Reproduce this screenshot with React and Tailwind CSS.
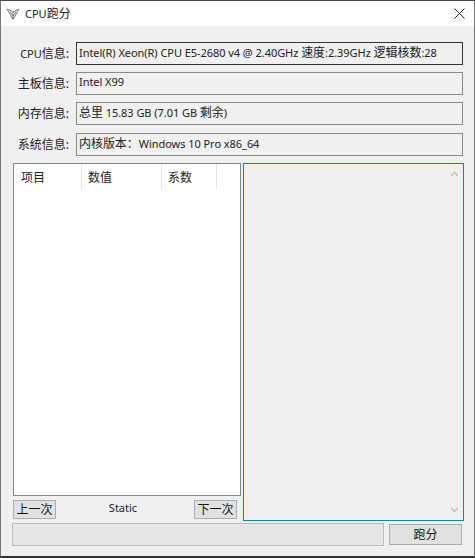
const font = { fontFamily: '"Noto Sans","Noto Sans CJK SC",sans-serif' };

function C({ children }) {
  return <span className="text-[12px]">{children}</span>;
}

function Row({ label, children, dark, className }) {
  return (
    <div className={`flex items-center ${className}`}>
      <div className="w-[70px] pr-[2px] text-right text-[11px] text-[#222] leading-none whitespace-nowrap">
        {label}
      </div>
      <div
        className={`ml-[5px] w-[387px] h-full border flex items-center pl-[2px] pb-[2px] text-[11px] tracking-[-0.05px] text-[#222] whitespace-pre overflow-hidden ${
          dark ? 'border-[#333]' : 'border-[#8a8a8a]'
        }`}
      >
        <span>{children}</span>
      </div>
    </div>
  );
}

function SmallBtn({ children }) {
  return (
    <button className="w-[43px] h-[19px] bg-[#e1e1e1] border border-[#adadad] text-[12px] leading-none text-[#111] flex items-center justify-center">
      {children}
    </button>
  );
}

export default function App() {
  return (
    <div
      className="w-[475px] h-[558px] bg-[#f0f0f0] flex flex-col border-t border-t-[#444] border-x border-x-[#777] border-b-2 border-b-[#333] overflow-hidden"
      style={font}
    >
      <div className="h-[25px] bg-white shrink-0 flex items-center">
        <svg width="14" height="14" viewBox="0 0 14 14" className="ml-[5px]" fill="none" stroke="#777" strokeWidth="1">
          <path d="M1 2 L7 12.5 L13 2 L7 5 Z" />
          <path d="M4 5 L7 9 L10 5 M7 5 V12" />
        </svg>
        <span className="ml-[5px] text-[11px] text-[#222]">CPU<C>跑分</C></span>
        <svg width="11" height="11" viewBox="0 0 11 11" className="ml-auto mr-[9px]" stroke="#222" strokeWidth="1" fill="none">
          <path d="M0.5 0.5 L10.5 10.5 M10.5 0.5 L0.5 10.5" />
        </svg>
      </div>

      <Row label={<>CPU<C>信息:</C></>} dark className="h-[23px] mt-[16px]">
        Intel(R) Xeon(R) CPU E5-2680 v4 @ 2.40GHz <C>速度</C>:2.39GHz <C>逻辑核数</C>:28
      </Row>
      <Row label={<C>主板信息:</C>} className="h-[23px] mt-[7px]">Intel X99</Row>
      <Row label={<C>内存信息:</C>} className="h-[23px] mt-[7px]">
        <C>总里</C> 15.83 GB (7.01 GB <C>剩余</C>)
      </Row>
      <Row label={<C>系统信息:</C>} className="h-[23px] mt-[8px]">
        <C>内核版本：</C>Windows 10 Pro x86_64
      </Row>

      <div className="flex mt-[7px] ml-[12px] h-[358px]">
        <div className="w-[228px] flex flex-col">
          <div className="h-[333px] bg-white border border-[#828790]">
            <div className="h-[26px] flex text-[12px] text-[#222] items-center">
              <div className="w-[68px] h-full pl-[7px] pt-px flex items-center border-r border-[#e5e5e5]">项目</div>
              <div className="w-[80px] h-full pl-[6px] pt-px flex items-center border-r border-[#e5e5e5]">数值</div>
              <div className="w-[55px] h-full pl-[6px] pt-px flex items-center border-r border-[#e5e5e5]">系数</div>
            </div>
          </div>
          <div className="flex items-center mt-[4px] w-[224px] justify-between">
            <SmallBtn>上一次</SmallBtn>
            <span className="text-[11px] text-[#222] pb-[2px] ml-[-4px]">Static</span>
            <SmallBtn>下一次</SmallBtn>
          </div>
        </div>
        <div className="ml-[2px] w-[221px] h-full border border-t-[#0f86ad] border-x-[#0f86ad] border-b-[#0f86ad] flex justify-end">
          <div className="w-[18px] h-full flex flex-col items-center justify-between py-[7px] border-l border-l-[#f5f5f5]">
            <svg width="9" height="6" viewBox="0 0 9 6" fill="none" stroke="#c4c4c4" strokeWidth="1.6">
              <path d="M1 5 L4.5 1.5 L8 5" />
            </svg>
            <svg width="9" height="6" viewBox="0 0 9 6" fill="none" stroke="#c4c4c4" strokeWidth="1.6">
              <path d="M1 1 L4.5 4.5 L8 1" />
            </svg>
          </div>
        </div>
      </div>

      <div className="flex items-center mt-[2px] ml-[11px] h-[23px]">
        <div className="w-[372px] h-full bg-[#e6e6e6] border border-[#bcbcbc]" />
        <button className="ml-[5px] w-[73px] h-[21px] bg-[#e1e1e1] border border-[#adadad] text-[12px] leading-none text-[#111] flex items-center justify-center">
          跑分
        </button>
      </div>
    </div>
  );
}
